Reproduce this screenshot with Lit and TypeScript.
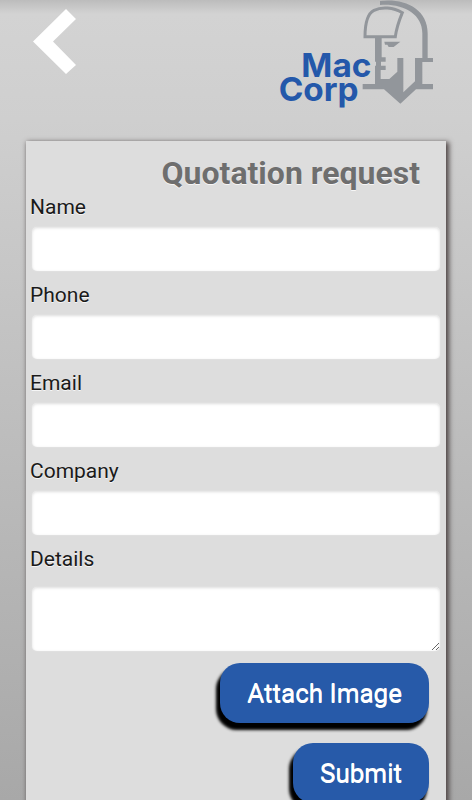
import { LitElement, html, css } from "lit";
import { customElement } from "lit/decorators.js";

@customElement("mac-logo")
class MacLogo extends LitElement {
  static styles = css`
    :host {
      display: block;
    }
    .logo {
      display: block;
      width: 175px;
      height: 120px;
    }
    .metal {
      fill: #92969b;
    }
    .helmet {
      fill: none;
      stroke: #92969b;
      stroke-width: 9px;
    }
    .word {
      fill: #2458aa;
      font-family: Inter, "Liberation Sans", sans-serif;
      font-size: 100px;
      font-weight: 700;
    }
  `;

  render() {
    return html`
      <svg class="logo" viewBox="0 0 525 360" role="img" aria-label="Mac Corp">
        <path
          class="metal"
          d="M330 3C400 -6 473 24 473 100V174H489V186H457V252H489V268H438L391 311L342 268H278V252H315V210H315V197H318V185H315V172H315V112H335V172H347V185H333V197H347V210H332V237H358L382 215V174H400V277L435 244V174H457V100C457 42 400 10 330 15Z"
        />
        <path
          class="helmet"
          d="M285 110C285 72 290 42 312 31C335 19 370 22 397 38C388 60 380 80 376 110Z"
        />
        <path class="metal" d="M343 125H391L371 141H356L352 134H345Z" />
        <text class="word" x="94" y="231">Mac</text>
        <text class="word" x="26" y="302">Corp</text>
      </svg>
    `;
  }
}

@customElement("app-root")
class AppRoot extends LitElement {
  static styles = css`
    :host {
      display: block;
      height: 100vh;
      overflow-y: auto;
      scrollbar-width: none;
      background: linear-gradient(#bcbcbc 0, #d3d3d3 14px, #cfcfcf 120px, #a8a8a8 100%);
      font-family: Roboto, "Liberation Sans", sans-serif;
      color: #1a1a1a;
    }
    * {
      box-sizing: border-box;
    }
    .bar {
      display: flex;
      justify-content: space-between;
      align-items: flex-start;
      height: 141px;
      padding: 0 27px 0 33px;
    }
    .back {
      padding: 9px 0 0;
      border: 0;
      background: none;
    }
    .chevron {
      display: block;
      width: 43px;
      height: 65px;
      fill: #fff;
    }
    .card {
      margin: 0 26px 26px;
      padding: 14px 6px 20px;
      background: #ddd;
      box-shadow: 2px 2px 5px 1px #4f4646;
      text-shadow: 0 1px 0 #f6f6f6;
    }
    .title {
      margin: 0;
      padding-right: 20px;
      font-size: 32px;
      line-height: 36px;
      font-weight: 700;
      text-align: right;
      color: #6e6e6e;
    }
    .fields {
      display: flex;
      flex-direction: column;
      gap: 10px;
      padding: 2px 0 12px;
    }
    .field {
      display: flex;
      flex-direction: column;
      gap: 6px;
    }
    .label {
      margin-left: -2px;
      font-size: 21px;
      line-height: 28px;
    }
    .box {
      display: block;
      width: 100%;
      height: 44px;
      margin: 0;
      padding: 8px;
      border: 0;
      border-radius: 5px;
      outline: none;
      background: #fff;
      box-shadow: 0 0 2px #e8e8e8, inset 0 1px 3px #ddd;
      font: 21px Roboto, "Liberation Sans", sans-serif;
    }
    .details {
      gap: 14px;
    }
    .tall {
      height: 64px;
      resize: vertical;
    }
    .actions {
      display: flex;
      flex-direction: column;
      align-items: flex-end;
      gap: 20px;
      padding-right: 11px;
    }
    .action {
      height: 60px;
      padding: 0 27px;
      border: 0;
      border-radius: 20px;
      background: #275aa9;
      box-shadow: -3px 6px 3px 1px #000;
      color: #fff;
      font: 26px Roboto, "Liberation Sans", sans-serif;
      text-shadow: 0 1px 0 #fff;
    }
  `;

  fields = [
    { id: "name", label: "Name", type: "text" },
    { id: "phone", label: "Phone", type: "tel" },
    { id: "email", label: "Email", type: "email" },
    { id: "company", label: "Company", type: "text" },
  ];

  render() {
    return html`
      <header class="bar">
        <button class="back" type="button" aria-label="Back">
          <svg class="chevron" viewBox="0 0 43 65" aria-hidden="true">
            <path d="M33 0L43 10L20 32.500L43 56L33 65L0 32.500Z" />
          </svg>
        </button>
        <mac-logo></mac-logo>
      </header>
      <form class="card">
        <h1 class="title">Quotation request</h1>
        <div class="fields">
          ${this.fields.map(
            (f) => html`
              <div class="field">
                <label class="label" for=${f.id}>${f.label}</label>
                <input class="box" id=${f.id} type=${f.type} />
              </div>
            `
          )}
          <div class="field details">
            <label class="label" for="details">Details</label>
            <textarea class="box tall" id="details"></textarea>
          </div>
        </div>
        <div class="actions">
          <button class="action" type="button">Attach Image</button>
          <button class="action" type="submit">Submit</button>
        </div>
      </form>
    `;
  }
}
